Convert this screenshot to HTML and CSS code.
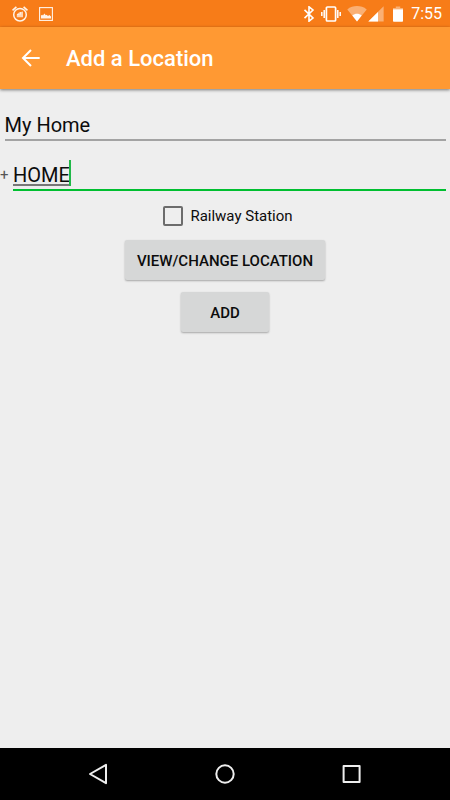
FILE: index.html
```html
<!DOCTYPE html>
<html lang="en">
<head>
<meta charset="utf-8">
<meta name="viewport" content="width=device-width, initial-scale=1">
<title>Add a Location</title>
<link rel="stylesheet" href="styles.css">
</head>
<body>
<div class="status">
  <svg class="alarm" width="16" height="16" viewBox="0 0 16 16" fill="none" stroke="currentColor">
    <circle cx="8" cy="8.7" r="6.3" stroke-width="1.5"/>
    <path d="M.5 4.4 4.4.9M15.5 4.4 11.6.9" stroke-width="1.7"/>
    <path d="M4.8 8.2 7 6.4l4-1v5.8H4.8z" fill="currentColor" fill-opacity=".75" stroke="none"/>
    <path d="M5 8.6h2.5M8.4 6v2.5" stroke-width=".9"/>
  </svg>
  <svg class="photo" width="14" height="14" viewBox="0 0 14 14" fill="none">
    <rect x=".6" y=".6" width="12.8" height="12.8" stroke="currentColor" stroke-width="1.1"/>
    <path d="M2 11.5V8.6l1.2-.8.8.6 1.4-1.8 1.4 1.6.8-.5 1.4 1.2 1.4-.9L12 9.5v2z" fill="currentColor"/>
  </svg>
  <div class="system">
    <svg class="bluetooth" width="12" height="16" viewBox="0 0 12 16" fill="none" stroke="currentColor" stroke-width="1.6">
      <path d="M1.5 3.8 10 12l-4 3.2V.8L10 4 1.5 12.2"/>
    </svg>
    <svg class="vibrate" width="20" height="16" viewBox="0 0 20 16" fill="none" stroke="currentColor" stroke-width="1.5">
      <rect x="5.4" y="1" width="9.2" height="14" rx="1" stroke-width="1.7"/>
      <path d="M3.2 4v8M.8 6v4M16.8 4v8M19.2 6v4"/>
    </svg>
    <svg class="wifi" width="20" height="16" viewBox="0 0 20 16" fill="currentColor">
      <path d="M.3 3.4C6-1 14-1 19.7 3.4L10 15.6z" opacity=".4"/>
      <path d="M5.3 9.5c2.8-2.2 6.6-2.2 9.4 0L10 15.6z"/>
    </svg>
    <svg class="signal" width="16" height="16" viewBox="0 0 16 16" fill="currentColor">
      <path d="M.3 15.6 15.6.3v15.3z" opacity=".4"/>
      <path d="M.3 15.6 10 6v9.6z"/>
    </svg>
    <svg class="battery" width="10" height="16" viewBox="0 0 10 16" fill="currentColor">
      <path d="M0 3.2V2h2.8V.4h4.4V2H10v1.2z" opacity=".4"/>
      <path d="M0 3.2h10V15a.8.8 0 0 1-.8.8H.8A.8.8 0 0 1 0 15z"/>
    </svg>
    <time class="clock">7:55</time>
  </div>
</div>
<header class="appbar">
  <button class="back" type="button" aria-label="Back">
    <svg width="20" height="18" viewBox="0 0 20 18" fill="none" stroke="currentColor" stroke-width="2">
      <path d="M18.7 9H2.5M10 1 2 9l8 8"/>
    </svg>
  </button>
  <h1>Add a Location</h1>
</header>
<main>
  <form class="form">
    <input class="field name" type="text" value="My Home" aria-label="Location name">
    <div class="tag-row">
      <label for="tag">+</label>
      <div class="tag-box">
        <input class="field tag" id="tag" type="text" value="HOME">
        <span class="cursor"></span>
      </div>
    </div>
    <label class="station"><input type="checkbox">Railway Station</label>
    <button class="action" type="button">VIEW/CHANGE LOCATION</button>
    <button class="action" type="submit">ADD</button>
  </form>
</main>
<nav class="navbar">
  <button type="button" aria-label="Back">
    <svg width="22" height="22" viewBox="0 0 22 22" fill="none" stroke="currentColor" stroke-width="2" stroke-linejoin="round"><path d="M18 1.8v18.4L2 11z"/></svg>
  </button>
  <button type="button" aria-label="Home">
    <svg width="22" height="22" viewBox="0 0 22 22" fill="none" stroke="currentColor" stroke-width="2"><circle cx="11" cy="11" r="8.7"/></svg>
  </button>
  <button type="button" aria-label="Recent apps">
    <svg width="22" height="22" viewBox="0 0 22 22" fill="none" stroke="currentColor" stroke-width="2" stroke-linejoin="round"><rect x="3.6" y="3" width="16" height="16"/></svg>
  </button>
</nav>
</body>
</html>
```
FILE: styles.css
```css
* {
  box-sizing: border-box;
}

body {
  margin: 0;
  min-height: 100vh;
  display: flex;
  flex-direction: column;
  background: #eeeeee;
  color: #0c0c0c;
  font-family: Roboto, sans-serif;
}

button {
  border: 0;
  padding: 0;
  background: none;
  color: inherit;
  font: inherit;
}

svg {
  display: block;
}

.status {
  display: flex;
  align-items: center;
  gap: 11px;
  height: 27px;
  padding: 0 8px 0 12px;
  background: #f77c18;
  color: #fff3e8;
}

.system {
  display: flex;
  align-items: center;
  margin-left: auto;
  color: #fff;
}

.vibrate {
  margin-left: 6px;
}

.wifi {
  margin-left: 6px;
}

.signal {
  margin-left: 1px;
}

.battery {
  margin-left: 9px;
}

.clock {
  margin-left: 8px;
  padding-top: 1px;
  font-size: 16px;
  line-height: 20px;
}

.appbar {
  display: flex;
  align-items: center;
  gap: 25px;
  height: 62px;
  padding-left: 21px;
  background: #ff9933;
  color: #fff;
  box-shadow: 0 1px 3px rgba(0, 0, 0, 0.5);
}

.appbar h1 {
  margin: 0;
  padding-top: 2px;
  font-size: 22px;
  font-weight: 500;
  line-height: 28px;
}

main {
  flex: 1;
}

.form {
  display: flex;
  flex-direction: column;
  align-items: center;
  padding: 20px 0;
}

.field {
  display: block;
  border: 0;
  border-radius: 0;
  outline: 0;
  padding: 2px 0 0;
  background: none;
  color: inherit;
  font: 20px/30px Roboto, sans-serif;
}

.name {
  width: calc(100% - 9px);
  height: 32px;
  border-bottom: 2px solid #a3a3a3;
}

.tag-row {
  display: flex;
  align-items: center;
  align-self: stretch;
  margin-top: 17px;
  padding-right: 4px;
}

.tag-row label {
  width: 13px;
  color: #555;
  font-size: 15px;
}

.tag-box {
  position: relative;
  flex: 1;
}

.tag {
  width: 100%;
  height: 33px;
  border-bottom: 2px solid #00bf30;
  text-decoration: underline 2px #777;
  text-underline-offset: 2px;
}

.cursor {
  position: absolute;
  left: 56px;
  top: 2px;
  width: 2px;
  height: 26px;
  background: #20b848;
}

.station {
  display: flex;
  align-items: center;
  gap: 7px;
  margin-top: 15px;
  padding-left: 6px;
  font-size: 15px;
  line-height: 20px;
}

.station input {
  appearance: none;
  width: 20px;
  height: 20px;
  margin: 0;
  border: 2px solid #6c6c6c;
  border-radius: 2px;
}

.action {
  min-width: 88px;
  height: 40px;
  margin-top: 14px;
  padding: 2px 12px 0;
  border-radius: 2px;
  background: #d6d7d7;
  box-shadow: 0 1px 2px rgba(0, 0, 0, 0.3);
  font-size: 15px;
  font-weight: 500;
}

.action + .action {
  margin-top: 12px;
}

.navbar {
  display: grid;
  grid-template-columns: repeat(3, 28%);
  justify-content: center;
  height: 52px;
  background: #000;
  color: #eee;
}

.navbar button {
  display: grid;
  place-items: center;
}
```
